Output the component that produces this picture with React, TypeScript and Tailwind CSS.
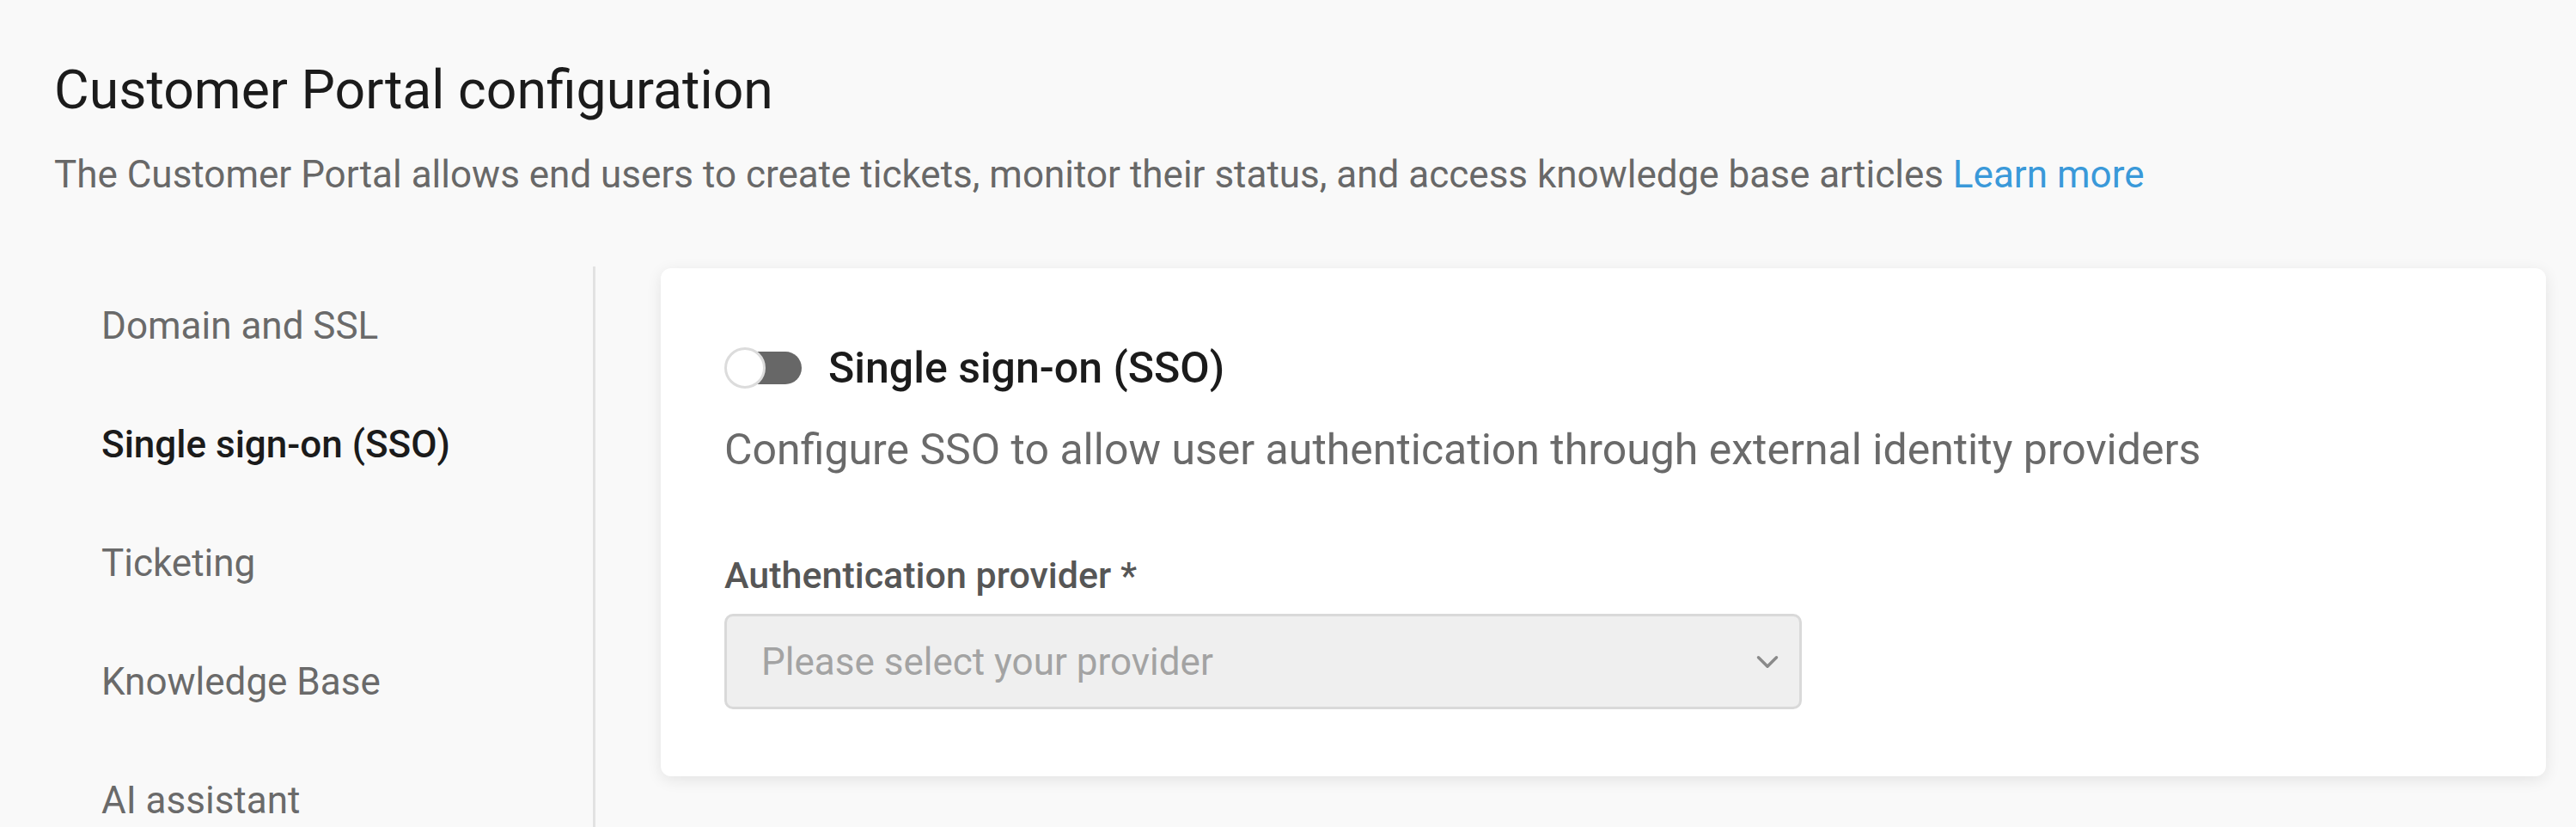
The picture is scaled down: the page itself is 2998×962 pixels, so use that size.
import { ChevronDown } from 'lucide-react'

const NAV_ITEMS = ['Domain and SSL', 'Single sign-on (SSO)', 'Ticketing', 'Knowledge Base', 'AI assistant']
const ACTIVE = 'Single sign-on (SSO)'

function Toggle() {
  return (
    <div className="relative w-[90px] h-[50px] shrink-0">
      <div className="absolute left-[6px] right-0 top-[6px] h-[38px] rounded-full bg-[#676767]" />
      <div className="absolute left-0 top-px w-[48px] h-[48px] rounded-full bg-white border-[3px] border-[#dcdcdc]" />
    </div>
  )
}

export default function App() {
  return (
    <div className="min-h-screen bg-[#f9f9f9] font-['Roboto','Liberation_Sans',sans-serif] overflow-hidden">
      <div className="pl-[63px] pr-[35px] pt-[68px]">
        <h1 className="text-[62.5px] leading-[74px] text-[#1b1b1b]">Customer Portal configuration</h1>
        <p className="mt-[35px] text-[44px] leading-[52px] text-[#686868]">
          The Customer Portal allows end users to create tickets, monitor their status, and access knowledge base articles{' '}
          <a className="text-[#3a99d9]" href="#">Learn more</a>
        </p>

        <div className="mt-[81px] flex items-start">
          <nav className="w-[630px] shrink-0 border-r-[3px] border-[#e2e2e2] pl-[55px] min-h-[700px]">
            {NAV_ITEMS.map(item => (
              <div
                key={item}
                className={`h-[138px] leading-[138px] text-[44px] ${item === ACTIVE ? 'font-medium text-[#1b1b1b]' : 'text-[#6a6a6a]'}`}
              >
                {item}
              </div>
            ))}
          </nav>

          <section className="flex-1 ml-[76px] mt-[2px] bg-white rounded-[12px] shadow-[0_4px_18px_rgba(0,0,0,0.09)] pl-[74px] pr-[74px] pt-[88px] pb-[78px]">
            <div className="flex items-center gap-[31px]">
              <Toggle />
              <h2 className="text-[50px] leading-[56px] font-medium text-[#1b1b1b]">Single sign-on (SSO)</h2>
            </div>
            <p className="mt-[38px] text-[50px] leading-[58px] text-[#6a6a6a]">
              Configure SSO to allow user authentication through external identity providers
            </p>
            <label className="block mt-[92px] text-[43px] leading-[50px] font-medium text-[#565656]">
              Authentication provider *
            </label>
            <button
              type="button"
              className="mt-[20px] w-[1254px] h-[111px] flex items-center justify-between rounded-[10px] border-[3px] border-[#d9d9d9] bg-[#efefef] pl-[40px] pr-[16px] text-left"
            >
              <span className="text-[44px] text-[#a3a3a3]">Please select your provider</span>
              <ChevronDown className="w-[42px] h-[42px] text-[#8a8a8a]" strokeWidth={2} />
            </button>
          </section>
        </div>
      </div>
    </div>
  )
}
